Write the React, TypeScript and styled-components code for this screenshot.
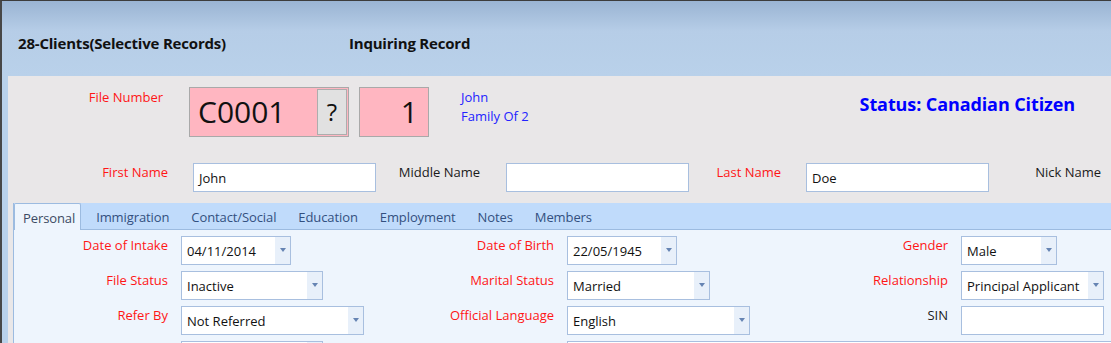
import React from "react";
import styled, { createGlobalStyle } from "styled-components";

const GlobalStyle = createGlobalStyle`
  html, body {
    margin: 0;
    padding: 0;
    background: #b9d1ea;
    overflow: hidden;
  }
  body {
    font-family: "Open Sans", "Noto Sans", sans-serif;
    font-size: 13px;
    color: #111;
  }
`;

const Window = styled.div`
  width: 1111px;
  height: 343px;
  box-sizing: border-box;
  border-top: 1px solid #3c3c3c;
  border-left: 2px solid #474747;
  background: #b9d1ea;
  display: flex;
  flex-direction: column;
  overflow: hidden;
`;

const Header = styled.header`
  height: 75px;
  flex: none;
  box-sizing: border-box;
  display: flex;
  align-items: center;
  padding: 8px 0 0 16px;
  background: linear-gradient(#9ab4d3 0px, #b6cde7 30px, #b9d1ea 100%);
`;

const Title = styled.h1<{ $w?: number }>`
  margin: 0;
  width: ${(p) => (p.$w ? `${p.$w}px` : "auto")};
  font-size: 15px;
  font-weight: 700;
  letter-spacing: -0.2px;
  color: #111;
`;

const Body = styled.main`
  flex: 1;
  margin-left: 6px;
  padding-top: 11px;
  background: #e9e7e8;
  display: flex;
  flex-direction: column;
  min-height: 0;
`;

const FileRow = styled.div`
  display: flex;
  align-items: flex-start;
  height: 50px;
`;

const Label = styled.div<{ $w?: number; $red?: boolean; $top?: number }>`
  flex: none;
  width: ${(p) => (p.$w ? `${p.$w}px` : "auto")};
  margin-top: ${(p) => p.$top ?? 0}px;
  text-align: right;
  line-height: 18px;
  white-space: nowrap;
  color: ${(p) => (p.$red ? "#ff1616" : "#1a1a1a")};
`;

const FileBox = styled.div`
  margin-left: 26px;
  width: 160px;
  height: 50px;
  box-sizing: border-box;
  display: flex;
  align-items: center;
  justify-content: space-between;
  padding: 0 1px 0 8px;
  background: #ffb6c1;
  border: 1px solid #a9a9a9;
  font-size: 30px;
  line-height: 48px;
`;

const LookupButton = styled.button`
  width: 30px;
  height: 46px;
  padding: 0;
  background: #e1e1e1;
  border: 1px solid #adadad;
  font-family: inherit;
  font-size: 24px;
  color: #111;
  line-height: 40px;
`;

const NumBox = styled.div`
  margin-left: 10px;
  width: 70px;
  height: 50px;
  box-sizing: border-box;
  padding-right: 10px;
  background: #ffb6c1;
  border: 1px solid #a9a9a9;
  text-align: right;
  font-size: 30px;
  line-height: 48px;
`;

const Family = styled.div`
  margin: 1px 0 0 32px;
  color: #2323ff;
  line-height: 19px;
`;

const Status = styled.div`
  margin: 5px 36px 0 auto;
  color: #0000ff;
  font-size: 18px;
  font-weight: 700;
  line-height: 24px;
  letter-spacing: -0.1px;
`;

const NameRow = styled.div`
  display: flex;
  align-items: flex-start;
  margin-top: 26px;
  height: 29px;
`;

const Field = styled.div<{ $w?: number; $ml?: number }>`
  flex: none;
  width: ${(p) => (p.$w ? `${p.$w}px` : "auto")};
  margin-left: ${(p) => p.$ml ?? 0}px;
  height: 29px;
  box-sizing: border-box;
  display: flex;
  align-items: center;
  background: #fff;
  border: 1px solid #a8bfdf;
  color: #111;
  white-space: nowrap;
  overflow: hidden;
`;

const FieldText = styled.span`
  flex: 1;
  padding: 1px 5px 0;
`;

const ArrowZone = styled.span`
  flex: none;
  width: 15px;
  align-self: stretch;
  display: flex;
  align-items: center;
  justify-content: center;
  padding-bottom: 2px;
  box-sizing: border-box;
  background: #e8f0fa;
  &::after {
    content: "";
    border-left: 3.5px solid transparent;
    border-right: 3.5px solid transparent;
    border-top: 4px solid #6684b3;
  }
`;

const TabControl = styled.section`
  flex: 1;
  margin: 11px 0 0 5px;
  border-left: 1px solid #9cbbe0;
  background: #eef5fd;
  display: flex;
  flex-direction: column;
  min-height: 0;
`;

const TabStrip = styled.div`
  flex: none;
  height: 26px;
  display: flex;
  align-items: flex-end;
  background: #c0dbfb;
  border-bottom: 1px solid #9cbbe0;
`;

const Tab = styled.div<{ $active?: boolean }>`
  height: ${(p) => (p.$active ? 27 : 26)}px;
  box-sizing: border-box;
  display: flex;
  align-items: center;
  padding: ${(p) => (p.$active ? "2px 5px 0 8px" : "2px 11px 0")};
  margin: ${(p) => (p.$active ? "0 4px -1px 0" : "0")};
  background: ${(p) => (p.$active ? "#eef5fd" : "transparent")};
  border: ${(p) => (p.$active ? "1px solid #9cbbe0" : "none")};
  border-bottom: none;
  border-radius: 2px 2px 0 0;
  color: ${(p) => (p.$active ? "#3c4a63" : "#33507f")};
  letter-spacing: -0.1px;
  white-space: nowrap;
`;

const TabPanel = styled.div`
  flex: 1;
  padding-top: 6px;
  display: grid;
  grid-template-columns: 154px 216px 144px 230px 138px 1fr;
  grid-auto-rows: 29px;
  column-gap: 13px;
  row-gap: 6px;
`;

const Cell = styled.div<{ $span?: boolean }>`
  display: flex;
  grid-column: ${(p) => (p.$span ? "4 / 7" : "auto")};
`;

const Wide = styled(Field)`
  width: calc(100% + 20px);
`;

type Item = { label: string; red?: boolean; value?: string; w: number; drop?: boolean };

const rows: Item[][] = [
  [
    { label: "Date of Intake", red: true, value: "04/11/2014", w: 110, drop: true },
    { label: "Date of Birth", red: true, value: "22/05/1945", w: 110, drop: true },
    { label: "Gender", red: true, value: "Male", w: 96, drop: true },
  ],
  [
    { label: "File Status", red: true, value: "Inactive", w: 142, drop: true },
    { label: "Marital Status", red: true, value: "Married", w: 143, drop: true },
    { label: "Relationship", red: true, value: "Principal Applicant", w: 143, drop: true },
  ],
  [
    { label: "Refer By", red: true, value: "Not Referred", w: 183, drop: true },
    { label: "Official Language", red: true, value: "English", w: 183, drop: true },
    { label: "SIN", value: "", w: 143 },
  ],
];

const tabs = ["Personal", "Immigration", "Contact/Social", "Education", "Employment", "Notes", "Members"];

const Input = ({ item }: { item: Item }) => (
  <Field $w={item.w}>
    <FieldText>{item.value}</FieldText>
    {item.drop && <ArrowZone />}
  </Field>
);

export default function App() {
  return (
    <>
      <GlobalStyle />
      <Window>
        <Header>
          <Title $w={331}>28-Clients(Selective Records)</Title>
          <Title>Inquiring Record</Title>
        </Header>
        <Body>
          <FileRow>
            <Label $w={155} $red $top={1}>File Number</Label>
            <FileBox>
              C0001
              <LookupButton>?</LookupButton>
            </FileBox>
            <NumBox>1</NumBox>
            <Family>
              John
              <br />
              Family Of 2
            </Family>
            <Status>Status: Canadian Citizen</Status>
          </FileRow>
          <NameRow>
            <Label $w={160} $red>First Name</Label>
            <Field $w={183} $ml={25}><FieldText>John</FieldText></Field>
            <Label $w={104}>Middle Name</Label>
            <Field $w={183} $ml={26}><FieldText /></Field>
            <Label $w={92} $red>Last Name</Label>
            <Field $w={183} $ml={25}><FieldText>Doe</FieldText></Field>
            <Label $w={112}>Nick Name</Label>
          </NameRow>
          <TabControl>
            <TabStrip>
              {tabs.map((t, i) => (
                <Tab key={t} $active={i === 0}>{t}</Tab>
              ))}
            </TabStrip>
            <TabPanel>
              {rows.map((row) =>
                row.map((item) => (
                  <React.Fragment key={item.label}>
                    <Label $red={item.red}>{item.label}</Label>
                    <Cell><Input item={item} /></Cell>
                  </React.Fragment>
                ))
              )}
              <Label />
              <Cell><Input item={{ label: "", value: "", w: 142, drop: true }} /></Cell>
              <Label />
              <Cell $span>
                <Wide><FieldText /></Wide>
              </Cell>
            </TabPanel>
          </TabControl>
        </Body>
      </Window>
    </>
  );
}
